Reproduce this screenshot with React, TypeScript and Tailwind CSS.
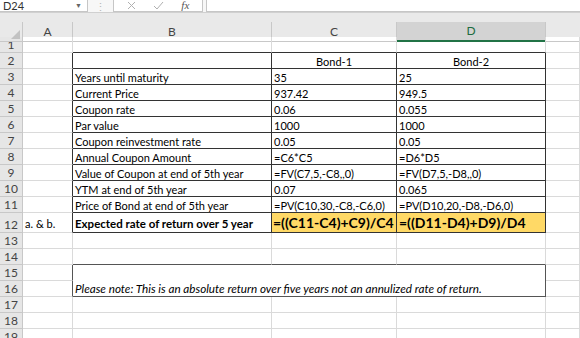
import React from 'react';

// grille : en-tête de ligne, A, B, C, D, E
const cols = 'grid grid-cols-[23px_50px_199px_125px_149px_1fr]';

interface Ligne {
  n: number;
  b: string;
  c: string;
  d: string;
}

const donnees: Ligne[] = [
  { n: 3, b: 'Years until maturity', c: '35', d: '25' },
  { n: 4, b: 'Current Price', c: '937.42', d: '949.5' },
  { n: 5, b: 'Coupon rate', c: '0.06', d: '0.055' },
  { n: 6, b: 'Par value', c: '1000', d: '1000' },
  { n: 7, b: 'Coupon reinvestment rate', c: '0.05', d: '0.05' },
  { n: 8, b: 'Annual Coupon Amount', c: '=C6*C5', d: '=D6*D5' },
  { n: 9, b: 'Value of Coupon at end of 5th year', c: '=FV(C7,5,-C8,,0)', d: '=FV(D7,5,-D8,,0)' },
  { n: 10, b: 'YTM at end of 5th year', c: '0.07', d: '0.065' },
  { n: 11, b: 'Price of Bond at end of 5th year', c: '=PV(C10,30,-C8,-C6,0)', d: '=PV(D10,20,-D8,-D6,0)' },
];

function NumLigne({ n }: { n: number }) {
  return (
    <div className="flex items-end justify-center bg-[#e6e6e6] border-r border-b border-[#c8c8c8] text-[#444] text-[12px] pb-[1px] leading-none">
      {n}
    </div>
  );
}

function Vide({ className = '' }: { className?: string }) {
  return <div className={`border-r border-b border-[#dadada] ${className}`} />;
}

export default function App() {
  return (
    <div className="w-[580px] h-[338px] overflow-hidden bg-white text-[11px] text-black font-['Lato','Liberation_Sans',sans-serif]">
      {/* barre de formule */}
      <div className="h-[13px] bg-[#f7f7f7] border-b border-[#d0d0d0] flex items-stretch text-[#333]">
        <div className="w-[88px] bg-white border-r border-b border-[#c6c6c6] flex items-center justify-between pl-[3px] pr-[5px]">
          <span className="leading-none">D24</span>
          <span className="text-[7px] text-[#666] leading-none">▼</span>
        </div>
        <div className="w-[25px] flex items-center justify-center text-[#b8b8b8] leading-none">⋮</div>
        <div className="w-[90px] bg-white border-x border-b border-[#c6c6c6] flex items-center justify-around px-[4px] text-[#aaa]">
          <svg width="9" height="9" viewBox="0 0 9 9"><path d="M1 1L8 8M8 1L1 8" stroke="#b0b0b0" strokeWidth="1" /></svg>
          <svg width="11" height="9" viewBox="0 0 11 9"><path d="M1 5L4 8L10 1" stroke="#b0b0b0" strokeWidth="1" fill="none" /></svg>
          <span className="italic font-['Liberation_Serif',serif] text-[#555] leading-none">fx</span>
        </div>
        <div className="flex-1 ml-[3px] bg-white border-l border-b border-[#c6c6c6]" />
      </div>

      {/* en-têtes de colonnes */}
      <div className="h-[24px] bg-[#e9e9e9] flex flex-col justify-end">
        <div className={`${cols} h-[15px] text-[#444] text-[12px]`}>
          <div className="relative border-r border-b border-[#c8c8c8]">
            <svg className="absolute right-[2px] bottom-[2px]" width="9" height="9" viewBox="0 0 9 9"><path d="M9 0V9H0Z" fill="#c2c2c2" /></svg>
          </div>
          <div className="flex items-center justify-center border-r border-b border-[#c8c8c8]">A</div>
          <div className="flex items-center justify-center border-r border-b border-[#c8c8c8]">B</div>
          <div className="flex items-center justify-center border-r border-b border-[#c8c8c8]">C</div>
          <div className="flex items-center justify-center bg-[#d3d3d3] border-r border-[#c8c8c8] border-b-2 border-b-[#217346] text-[#1d6b40]">D</div>
          <div className="border-b border-[#c8c8c8]" />
        </div>
      </div>

      {/* ligne 1 */}
      <div className={`${cols} h-4`}>
        <NumLigne n={1} />
        <Vide className="border-r-[#dadada]" />
        <div className="border-r border-r-[#dadada] border-b border-b-[#333]" />
        <div className="border-r border-r-[#dadada] border-b border-b-[#333]" />
        <div className="border-r border-r-[#dadada] border-b border-b-[#333]" />
        <Vide />
      </div>

      {/* ligne 2 */}
      <div className={`${cols} h-4`}>
        <NumLigne n={2} />
        <div className="border-r border-r-[#333] border-b border-b-[#dadada]" />
        <div className="border-r border-b border-[#333]" />
        <div className="border-r border-b border-[#333] flex items-end justify-center pb-[1px] leading-none">Bond-1</div>
        <div className="border-r border-b border-[#333] flex items-end justify-center pb-[1px] leading-none">Bond-2</div>
        <Vide />
      </div>

      {donnees.map((l) => (
        <div key={l.n} className={`${cols} h-4`}>
          <NumLigne n={l.n} />
          <div className="border-r border-r-[#333] border-b border-b-[#dadada]" />
          <div className="border-r border-b border-[#333] flex items-end px-[2px] pb-[1px] leading-none whitespace-nowrap">{l.b}</div>
          <div className="border-r border-b border-[#333] flex items-end px-[2px] pb-[1px] leading-none whitespace-nowrap">{l.c}</div>
          <div className="border-r border-b border-[#333] flex items-end px-[2px] pb-[1px] leading-none whitespace-nowrap">{l.d}</div>
          <Vide />
        </div>
      ))}

      {/* ligne 12 */}
      <div className={`${cols} h-5`}>
        <NumLigne n={12} />
        <div className="border-r border-r-[#333] border-b border-b-[#dadada] flex items-end px-[2px] pb-[3px] leading-none">a. &amp; b.</div>
        <div className="border-r border-b border-[#333] flex items-end px-[2px] pb-[3px] leading-none font-bold text-[11.5px] whitespace-nowrap">Expected rate of return over 5 year</div>
        <div className="bg-[#ffd966] border-r border-b border-[#333] flex items-end px-[1px] pb-[2px] leading-none font-bold text-[14px] whitespace-nowrap">=((C11-C4)+C9)/C4</div>
        <div className="bg-[#ffd966] border-r border-b border-[#333] flex items-end px-[2px] pb-[2px] leading-none font-bold text-[14px] whitespace-nowrap">=((D11-D4)+D9)/D4</div>
        <Vide />
      </div>

      {/* ligne 13 */}
      <div className={`${cols} h-4`}>
        <NumLigne n={13} />
        <Vide />
        <Vide />
        <Vide />
        <Vide />
        <Vide />
      </div>

      {/* ligne 14 */}
      <div className={`${cols} h-4`}>
        <NumLigne n={14} />
        <Vide />
        <div className="border-r border-r-[#dadada] border-b border-b-[#555]" />
        <div className="border-r border-r-[#dadada] border-b border-b-[#555]" />
        <div className="border-r border-r-[#dadada] border-b border-b-[#555]" />
        <Vide />
      </div>

      {/* lignes 15-16 : note fusionnée */}
      <div className={`${cols} grid-rows-[16px_16px]`}>
        <NumLigne n={15} />
        <div className="border-r border-r-[#555] border-b border-b-[#dadada]" />
        <div className="col-span-3 row-span-2 border-r border-b border-[#555] flex items-end px-[2px] pb-[1px] leading-none italic text-[11.7px] whitespace-nowrap">
          Please note: This is an absolute return over five years not an annulized rate of return.
        </div>
        <Vide />
        <NumLigne n={16} />
        <div className="border-r border-r-[#555] border-b border-b-[#dadada]" />
        <Vide />
      </div>

      {[17, 18, 19].map((n) => (
        <div key={n} className={`${cols} h-4`}>
          <NumLigne n={n} />
          <Vide />
          <Vide />
          <Vide />
          <Vide />
          <Vide />
        </div>
      ))}
    </div>
  );
}
